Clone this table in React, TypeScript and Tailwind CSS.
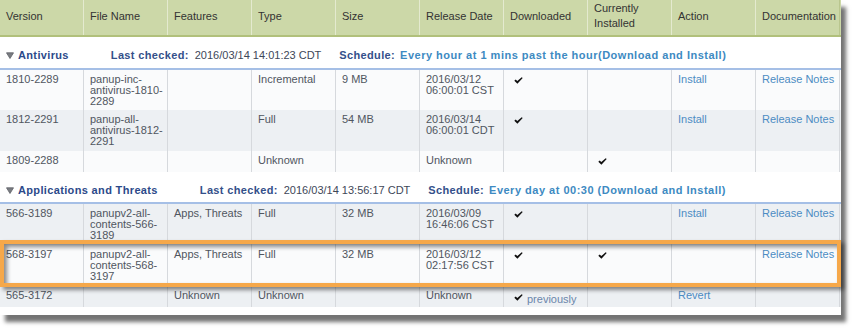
import React from 'react';

type CellVal = string[] | 'check' | 'prev' | { link: string } | null;
type Row = { bg: string; h: string; cells: CellVal[] };

const Check = () => (
  <svg width="9" height="7" viewBox="0 0 9 7" className="block">
    <path d="M0.3 3.7 L1.7 2.6 L3.3 4.1 L7.7 0.2 L8.7 1.1 L3.4 6.7 Z" fill="#111" />
  </svg>
);

const Tri = () => (
  <svg width="8" height="7" viewBox="0 0 8 7" className="block">
    <path d="M0.5 0.8 L7.5 0.8 L4 6.5 Z" fill="#7a7d82" stroke="#5d6066" strokeWidth="0.8" />
  </svg>
);

const headers: string[][] = [
  ['Version'],
  ['File Name'],
  ['Features'],
  ['Type'],
  ['Size'],
  ['Release Date'],
  ['Downloaded'],
  ['Currently', 'Installed'],
  ['Action'],
  ['Documentation'],
];

const avRows: Row[] = [
  {
    bg: 'bg-[#fafbfc]',
    h: 'h-[40px]',
    cells: [
      ['1810-2289'],
      ['panup-inc-', 'antivirus-1810-', '2289'],
      null,
      ['Incremental'],
      ['9 MB'],
      ['2016/03/12', '06:00:01 CST'],
      'check',
      null,
      { link: 'Install' },
      { link: 'Release Notes' },
    ],
  },
  {
    bg: 'bg-[#edf0f3]',
    h: 'h-[41px]',
    cells: [
      ['1812-2291'],
      ['panup-all-', 'antivirus-1812-', '2291'],
      null,
      ['Full'],
      ['54 MB'],
      ['2016/03/14', '06:00:01 CDT'],
      'check',
      null,
      { link: 'Install' },
      { link: 'Release Notes' },
    ],
  },
  {
    bg: 'bg-[#fafbfc]',
    h: 'h-[21px]',
    cells: [['1809-2288'], null, null, ['Unknown'], null, ['Unknown'], null, 'check', null, null],
  },
];

const atRows: Row[] = [
  {
    bg: 'bg-[#edf0f3]',
    h: 'h-[41px]',
    cells: [
      ['566-3189'],
      ['panupv2-all-', 'contents-566-', '3189'],
      ['Apps, Threats'],
      ['Full'],
      ['32 MB'],
      ['2016/03/09', '16:46:06 CST'],
      'check',
      null,
      { link: 'Install' },
      { link: 'Release Notes' },
    ],
  },
  {
    bg: 'bg-[#fafbfc]',
    h: 'h-[41px]',
    cells: [
      ['568-3197'],
      ['panupv2-all-', 'contents-568-', '3197'],
      ['Apps, Threats'],
      ['Full'],
      ['32 MB'],
      ['2016/03/12', '02:17:56 CST'],
      'check',
      'check',
      null,
      { link: 'Release Notes' },
    ],
  },
  {
    bg: 'bg-[#edf0f3]',
    h: 'h-[21px]',
    cells: [['565-3172'], null, ['Unknown'], ['Unknown'], null, ['Unknown'], 'prev', null, { link: 'Revert' }, null],
  },
];

const gridCols = 'grid grid-cols-[84px_84px_84px_84px_84px_84px_84px_84px_84px_84px]';

function Cell({ v }: { v: CellVal }) {
  const base = 'border-r border-[#d6d9dd] pl-[6px] pt-[4px] leading-[11px] whitespace-nowrap overflow-hidden';
  if (v === 'check') {
    return (
      <div className={base}>
        <div className="mt-[3px] ml-[4px]">
          <Check />
        </div>
      </div>
    );
  }
  if (v === 'prev') {
    return (
      <div className={base}>
        <div className="flex items-start ml-[4px]">
          <div className="mt-[4px]">
            <Check />
          </div>
          <span className="ml-[4px] mt-[4px] text-[#6a86ab]">previously</span>
        </div>
      </div>
    );
  }
  if (v && !Array.isArray(v)) {
    return (
      <div className={base}>
        <span className="text-[#4c8cc3]">{v.link}</span>
      </div>
    );
  }
  return (
    <div className={base}>
      {v?.map((l, i) => (
        <div key={i}>{l}</div>
      ))}
    </div>
  );
}

function BodyRow({ r }: { r: Row }) {
  return (
    <div className={`${gridCols} ${r.bg} ${r.h} text-[#50565f]`}>
      {r.cells.map((c, i) => (
        <Cell key={i} v={c} />
      ))}
    </div>
  );
}

function GroupRow({
  name,
  checked,
  schedule,
  h,
}: {
  name: string;
  checked: string;
  schedule: string;
  h: string;
}) {
  return (
    <div className={`${h} border-b-2 border-[#a5bfe6] bg-white pl-[6px] pt-[12px]`}>
      <div className="flex items-center leading-[13px] whitespace-nowrap">
        <Tri />
        <span className="ml-[4px] font-bold tracking-[0.35px] text-[#2c4a8a]">{name}</span>
        <span className="ml-[42px] font-bold tracking-[0.35px] text-[#34508a]">Last checked:</span>
        <span className="ml-[6px] text-[#3e4758]">{checked}</span>
        <span className="ml-[18px] font-bold tracking-[0.35px] text-[#34508a]">Schedule:</span>
        <span className="ml-[5px] font-bold tracking-[0.5px] text-[#3d8ac2]">{schedule}</span>
      </div>
    </div>
  );
}

export default function App() {
  return (
    <div className="w-[857px] h-[331px] bg-white font-['Liberation_Sans',Arial,sans-serif] text-[11px] overflow-hidden">
      <div className="relative w-[841px] bg-white pb-[8px] shadow-[5px_7px_4px_rgba(0,0,0,0.55)]">
        <div className={`${gridCols} bg-[#ccd8a8] border-b-2 border-[#b1c07b] text-[#333]`}>
          {headers.map((h, i) => (
            <div
              key={i}
              className={`h-[35px] flex flex-col justify-center pl-[6px] pb-[3px] border-r ${
                i === 9 ? 'border-[#b9c68e]' : 'border-[#e4eacf]'
              } ${h.length > 1 ? 'leading-[15px]' : 'leading-[14px]'}`}
            >
              {h.map((l, j) => (
                <div key={j}>{l}</div>
              ))}
            </div>
          ))}
        </div>

        <GroupRow
          h="h-[33px]"
          name="Antivirus"
          checked="2016/03/14 14:01:23 CDT"
          schedule="Every hour at 1 mins past the hour(Download and Install)"
        />
        {avRows.map((r, i) => (
          <BodyRow key={i} r={r} />
        ))}
        <GroupRow
          h="h-[32px]"
          name="Applications and Threats"
          checked="2016/03/14 13:56:17 CDT"
          schedule="Every day at 00:30 (Download and Install)"
        />
        {atRows.map((r, i) => (
          <BodyRow key={i} r={r} />
        ))}

        <div className="absolute left-0 top-[240px] w-[841px] h-[47px] border-4 border-[#f6a84a] shadow-[3px_3px_4px_rgba(0,0,0,0.45),inset_3px_3px_4px_rgba(0,0,0,0.45)] pointer-events-none" />
      </div>
    </div>
  );
}
